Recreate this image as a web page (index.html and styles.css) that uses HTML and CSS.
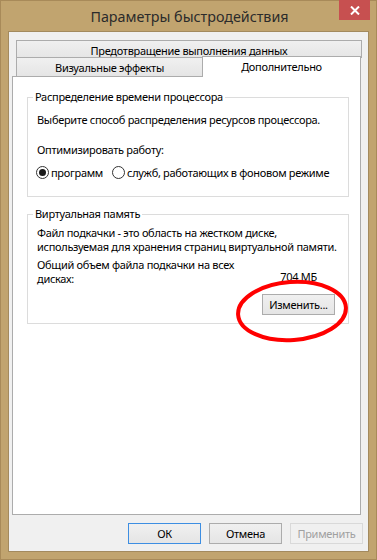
FILE: index.html
```html
<!DOCTYPE html>
<html lang="ru">
<head>
    <meta charset="UTF-8">
    <title>Параметры быстродействия</title>
    <link rel="stylesheet" href="styles.css">
</head>
<body>
    <div class="window">
        <div class="titlebar">
            <span class="title">Параметры быстродействия</span>
            <button class="close">
                <svg width="10" height="9" viewBox="0 0 10 9">
                    <path d="M1 0.5 L9 8.5 M9 0.5 L1 8.5" stroke="#fff" stroke-width="2"/>
                </svg>
            </button>
        </div>

        <div class="client">
            <div class="tabs">
                <div class="tab-row">
                    <div class="tab wide">Предотвращение выполнения данных</div>
                </div>
                <div class="tab-row">
                    <div class="tab visual">Визуальные эффекты</div>
                    <div class="tab active">Дополнительно</div>
                </div>
            </div>

            <div class="panel">
                <fieldset class="group cpu">
                    <legend>Распределение времени процессора</legend>
                    <p class="line">Выберите способ распределения ресурсов процессора.</p>
                    <p class="line optimize">Оптимизировать работу:</p>
                    <div class="radios">
                        <label class="radio"><span class="dot checked"></span>программ</label>
                        <label class="radio"><span class="dot"></span>служб, работающих в фоновом режиме</label>
                    </div>
                </fieldset>

                <fieldset class="group memory">
                    <legend>Виртуальная память</legend>
                    <p class="line">Файл подкачки - это область на жестком диске,<br>используемая для хранения страниц виртуальной памяти.</p>
                    <div class="total">
                        <p class="line">Общий объем файла подкачки на всех<br>дисках:</p>
                        <span class="size">704 МБ</span>
                    </div>
                    <div class="change-row">
                        <button class="button">Изменить...</button>
                    </div>
                </fieldset>
            </div>

            <div class="footer">
                <button class="button default">ОК</button>
                <button class="button">Отмена</button>
                <button class="button disabled">Применить</button>
            </div>
        </div>

        <!--red marker drawn over the dialog-->
        <svg class="marker" width="377" height="560" viewBox="0 0 377 560">
            <ellipse cx="292" cy="310" rx="54" ry="29" transform="rotate(-4 292 310)" fill="none" stroke="#ff0000" stroke-width="4"/>
        </svg>
    </div>
</body>
</html>
```

FILE: styles.css
```css
* {
    margin: 0;
    padding: 0;
    box-sizing: border-box;
}

body {
    font-family: "Noto Sans", "Open Sans", sans-serif;
    font-size: 11px;
    letter-spacing: -0.3px;
    color: #000;
    background-color: #c1a46f;
}

.window {
    position: relative;
    width: 377px;
    height: 560px;
    background-color: #c1a46f;
    border: 1px solid #a88a59;
    padding: 0 7px 7px 7px;
    display: flex;
    flex-direction: column;
}

.titlebar {
    height: 30px;
    display: flex;
    align-items: center;
    justify-content: center;
    position: relative;
}

.title {
    font-size: 14.3px;
    letter-spacing: 0;
    color: #2b2b2b;
    margin-top: 1px;
    margin-left: 2px;
}

.close {
    position: absolute;
    top: -1px;
    right: -1px;
    width: 31px;
    height: 20px;
    border: none;
    background-color: #c75050;
    display: flex;
    align-items: center;
    justify-content: center;
}

.client {
    flex: 1;
    background-color: #f0f0f0;
    border: 1px solid #a38a5e;
    padding: 8px 6px 0 5px;
    display: flex;
    flex-direction: column;
}

.tabs {
    margin: 0 0 0 2px;
}

.tab-row {
    display: flex;
    height: 18px;
}

.tab {
    background: linear-gradient(#f0f0f0, #e5e5e5);
    border: 1px solid #acacac;
    border-bottom: none;
    display: flex;
    align-items: center;
    justify-content: center;
    line-height: 1;
    white-space: nowrap;
}

.wide {
    width: 346px;
    padding-top: 1px;
}

.visual {
    width: 187px;
    height: 19px;
    margin-top: -1px;
    padding-top: 1px;
}

.active {
    width: 159px;
    height: 21px;
    margin-top: -2px;
    background: #fff;
    position: relative;
    z-index: 1;
    margin-left: -1px;
    padding-bottom: 1px;
}

.panel {
    height: 439px;
    margin-left: -2px;
    width: 349px;
    background-color: #fff;
    border: 1px solid #acacac;
    padding: 13px 11px 0 14px;
}

.group {
    border: 1px solid #dcdcdc;
    padding: 0 8px 0 9px;
    min-width: 0;
}

.group legend {
    padding: 0 2px;
    margin-left: -4px;
    line-height: 14px;
}

.line {
    line-height: 14px;
    white-space: nowrap;
}

.cpu {
    padding-top: 9px;
    padding-bottom: 16px;
}

.optimize {
    margin-top: 16px;
}

.radios {
    display: flex;
    gap: 9px;
    margin-top: 8px;
    margin-left: -1px;
    white-space: nowrap;
}

.radio {
    display: flex;
    align-items: center;
    gap: 2px;
}

.dot {
    width: 13px;
    height: 13px;
    border-radius: 50%;
    border: 1px solid #333;
    background-color: #fff;
    display: flex;
    align-items: center;
    justify-content: center;
}

.dot.checked::after {
    content: "";
    width: 7px;
    height: 7px;
    border-radius: 50%;
    background-color: #1a1a1a;
}

.memory {
    margin-top: 10px;
    padding-top: 5px;
    padding-bottom: 8px;
}

.total {
    display: flex;
    align-items: flex-end;
    margin-top: 4px;
}

.size {
    margin-left: auto;
    margin-right: 23px;
    line-height: 14px;
    padding-bottom: 2px;
    white-space: nowrap;
}

.change-row {
    display: flex;
    justify-content: flex-end;
    margin-top: 8px;
    margin-right: 5px;
}

.button {
    font-family: inherit;
    font-size: 11px;
    letter-spacing: -0.3px;
    width: 73px;
    height: 21px;
    border: 1px solid #acacac;
    background: linear-gradient(#f0f0f0, #e5e5e5);
    color: #000;
}

.footer {
    display: flex;
    justify-content: flex-end;
    gap: 8px;
    margin-top: 8px;
    margin-right: -1px;
}

.default {
    border-color: #3d8ee2;
}

.disabled {
    color: #a0a0a0;
    border-color: #d9d9d9;
    background: #f0f0f0;
}

.marker {
    position: absolute;
    left: -1px;
    top: 0;
    pointer-events: none;
}
```
